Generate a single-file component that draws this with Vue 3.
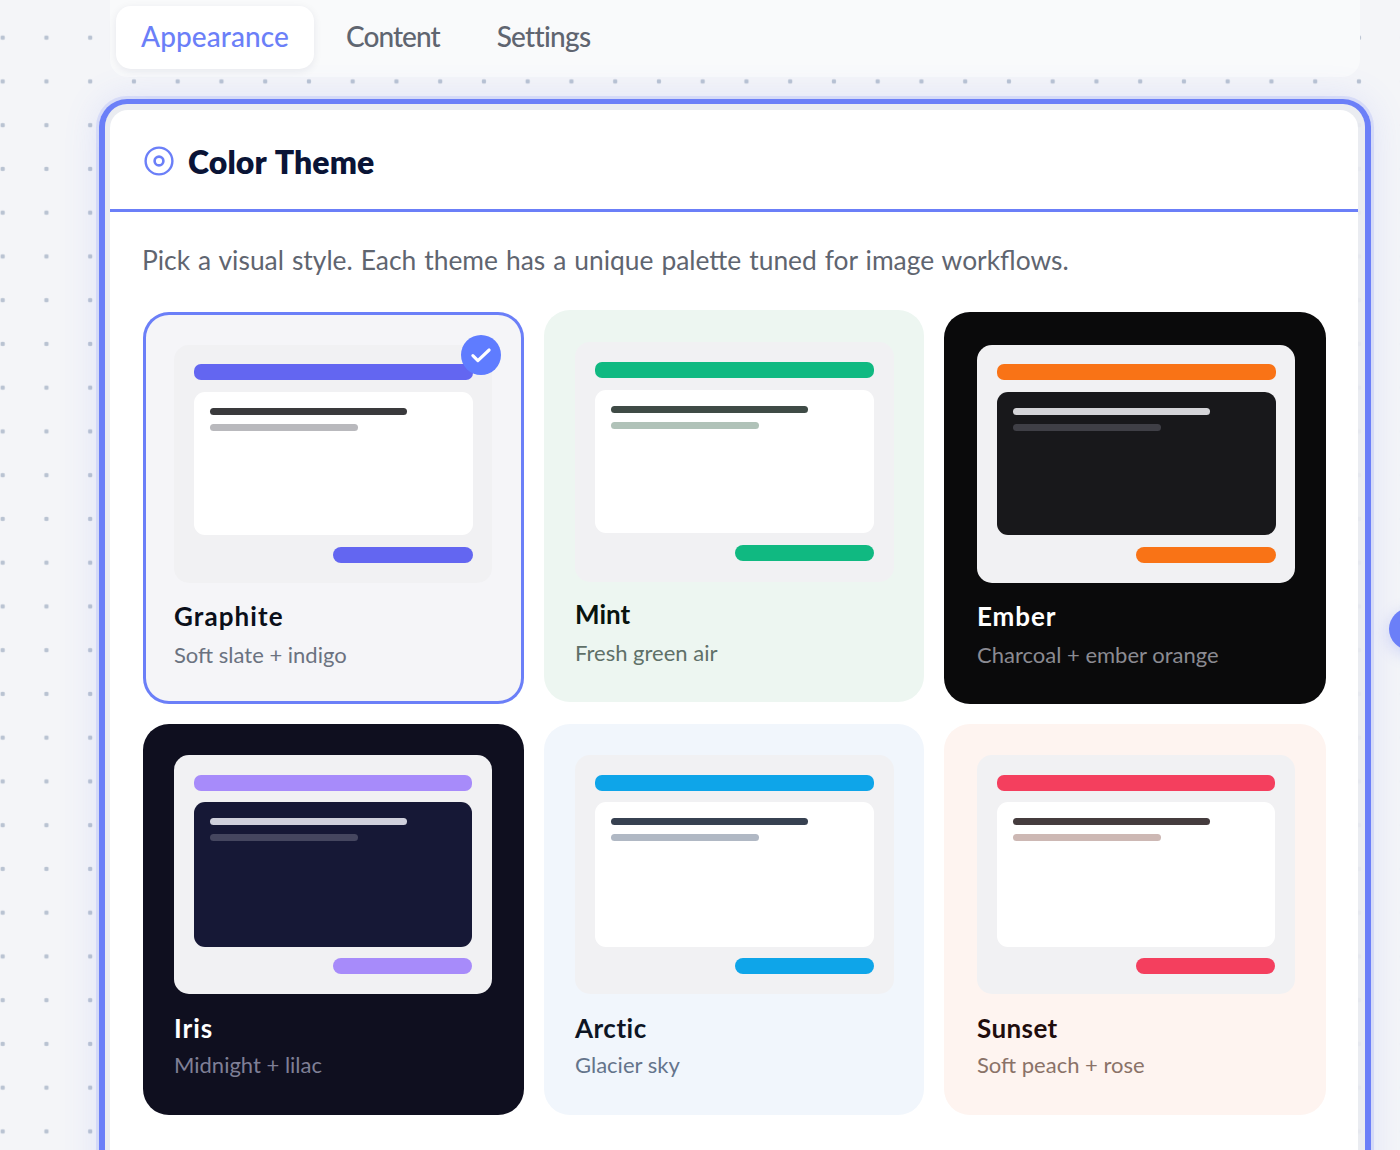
<script setup>
const themes = [
  { name: 'Graphite', sub: 'Soft slate + indigo', cls: 'graphite', selected: true },
  { name: 'Mint', sub: 'Fresh green air', cls: 'mint' },
  { name: 'Ember', sub: 'Charcoal + ember orange', cls: 'ember' },
  { name: 'Iris', sub: 'Midnight + lilac', cls: 'iris' },
  { name: 'Arctic', sub: 'Glacier sky', cls: 'arctic' },
  { name: 'Sunset', sub: 'Soft peach + rose', cls: 'sunset' }
]
</script>

<template>
  <div class="page">
    <nav class="tabs">
      <span class="tab active">Appearance</span>
      <span class="tab content">Content</span>
      <span class="tab settings">Settings</span>
    </nav>
    <div class="ring">
      <section class="panel">
        <header class="panel-head">
          <svg class="target" viewBox="0 0 30 30" width="30" height="30" fill="none" stroke="#6b7ff8">
            <circle cx="15" cy="15" r="13.4" stroke-width="2.4" />
            <circle cx="15" cy="15" r="4.4" stroke-width="2.6" />
          </svg>
          <h2>Color Theme</h2>
        </header>
        <div class="panel-body">
          <p class="desc">Pick a visual style. Each theme has a unique palette tuned for image workflows.</p>
          <div class="grid">
            <article v-for="t in themes" :key="t.name" class="theme" :class="[t.cls, { selected: t.selected }]">
              <span v-if="t.selected" class="check">
                <svg viewBox="0 0 24 24" width="30" height="30" fill="none" stroke="#fff" stroke-width="2.5" stroke-linecap="round" stroke-linejoin="round">
                  <path d="M5.5 12.5l4 4L18.5 8" />
                </svg>
              </span>
              <div class="preview">
                <div class="bar"></div>
                <div class="body">
                  <div class="line l1"></div>
                  <div class="line l2"></div>
                </div>
                <div class="foot"></div>
              </div>
              <h3>{{ t.name }}</h3>
              <p>{{ t.sub }}</p>
            </article>
          </div>
        </div>
      </section>
    </div>
    <span class="fab"></span>
  </div>
</template>

<style scoped>
.page {
  position: relative;
  height: 1150px;
  overflow: hidden;
  box-sizing: border-box;
  padding-left: 99px;
  background-color: #f4f5f8;
  background-image: radial-gradient(circle, #b9c3d2 2px, rgba(185, 195, 210, 0) 2.6px);
  background-size: 43.75px 43.75px;
  background-position: -19.2px 15.8px;
  font-family: Lato, "Noto Sans", sans-serif;
}
.tabs {
  display: flex;
  gap: 7px;
  box-sizing: border-box;
  width: 1250px;
  height: 77px;
  margin-left: 11px;
  padding: 6px;
  background: #f9fafb;
  border-radius: 0 0 18px 18px;
}
.tab {
  display: flex;
  align-items: center;
  box-sizing: border-box;
  padding: 0 25px 4px;
  height: 63px;
  border-radius: 15px;
  font-size: 28px;
  font-weight: 500;
  color: #5f6570;
}
.tab.active {
  background: #fff;
  color: #6b7ff8;
  letter-spacing: 0.1px;
  box-shadow: 0 2px 8px rgba(20, 30, 60, 0.08);
}
.tab.content { letter-spacing: -0.95px; }
.tab.settings { letter-spacing: -0.7px; }
.ring {
  box-sizing: border-box;
  width: 1272px;
  height: 1130px;
  margin-top: 22px;
  padding: 6px 7px 0 5px;
  border: 6px solid #6b7ff8;
  border-top-width: 5px;
  border-bottom: 0;
  border-radius: 28px 28px 0 0;
  background: rgba(232, 234, 240, 0.92);
  box-shadow: 0 0 0 3px rgba(107, 127, 248, 0.16), 0 0 36px rgba(107, 127, 248, 0.16);
}
.panel {
  height: 100%;
  background: #fff;
  border-radius: 18px 18px 0 0;
}
.panel-head {
  display: flex;
  align-items: center;
  gap: 14px;
  box-sizing: border-box;
  height: 102px;
  padding: 3px 34px 0;
  border-bottom: 3px solid #6b7ff8;
}
.target { flex: none; }
h2 {
  margin: 0;
  font-size: 32px;
  font-weight: 800;
  letter-spacing: 0.1px;
  word-spacing: 2px;
  color: #0a1436;
}
.panel-body { padding: 0 32px 0 33px; }
.desc {
  margin: 0 0 0 -1px;
  padding-top: 29px;
  font-size: 26.4px;
  word-spacing: 1.2px;
  line-height: 38px;
  color: #5f6570;
}
.grid {
  display: grid;
  grid-template-columns: 381px 380px 382px;
  grid-template-rows: 392px 391px;
  gap: 20px;
  margin-top: 33px;
}
.theme {
  position: relative;
  box-sizing: border-box;
  padding: 33px 32px 0 31px;
  border-radius: 26px;
  --preview: #f1f1f3;
  --panel: #fff;
}
.preview {
  display: flex;
  flex-direction: column;
  gap: 12px;
  box-sizing: border-box;
  height: 238px;
  padding: 18.5px 19.5px 20px;
  background: var(--preview);
  border-radius: 15px;
}
.bar, .foot {
  height: 16px;
  flex: none;
  border-radius: 7px;
  background: var(--accent);
}
.foot {
  width: 50%;
  align-self: flex-end;
  border-radius: 8px;
}
.body {
  flex: 1;
  padding: 16px;
  background: var(--panel);
  border-radius: 11px;
}
.line {
  height: 7px;
  border-radius: 4px;
}
.l1 { width: 197px; background: var(--line1); }
.l2 { width: 148px; margin-top: 9px; background: var(--line2); }
h3 {
  margin: 16px 0 0;
  font-size: 26px;
  line-height: 34px;
  font-weight: 700;
  letter-spacing: var(--ls);
  color: var(--title);
}
.theme p {
  margin: 6px 0 0;
  font-size: 22px;
  line-height: 32px;
  color: var(--sub);
}
.graphite { background: #f5f5f8; --ls: 1.1px; --accent: #6366f1; --line1: #3a3a3c; --line2: #b9b9bd; --title: #0b0f1a; --sub: #6b7280; }
.mint { background: #edf6f1; --ls: 0; --accent: #10b981; --line1: #3f4b46; --line2: #b0c2b8; --title: #08140e; --sub: #5f7068; transform: translateY(-2px); padding: 32px 30px 0 31px; }
.mint .preview { height: 240px; padding: 19.5px 20px 21px; }
.mint h3 { margin-top: 15px; }
.ember { background: #0a0a0b; --ls: 0.9px; --accent: #f97316; --panel: #18181b; --line1: #d4d4d8; --line2: #3f3f46; --title: #fff; --sub: #8b8b92; padding: 33px 31px 0 33px; }
.iris, .arctic, .sunset { padding-top: 31px; }
.iris .preview, .arctic .preview, .sunset .preview { height: 239px; padding: 20px; gap: 11px; }
.iris h3, .arctic h3, .sunset h3 { margin-top: 17px; }
.iris p, .arctic p, .sunset p { margin-top: 4px; }
.iris { background: #0f0f1f; --ls: 1px; --accent: #a78bfa; --panel: #161836; --line1: #cfd0dc; --line2: #45465f; --title: #fff; --sub: #7f7f96; }
.arctic { background: #f1f6fc; --ls: 0.5px; --accent: #0ea5e9; --line1: #374151; --line2: #b0b8c4; --title: #0d1524; --sub: #64748b; padding-right: 30px; }
.sunset { background: #fef4f0; --ls: 0.4px; --accent: #f43f5e; --line1: #453c3e; --line2: #cdb8b4; --title: #1f0d0d; --sub: #8a7268; padding-left: 33px; padding-right: 31px; }
.selected {
  box-shadow: inset 0 0 0 3px #6b7ff8;
}
.check {
  position: absolute;
  top: 23px;
  right: 23px;
  display: flex;
  align-items: center;
  justify-content: center;
  width: 40px;
  height: 40px;
  border-radius: 50%;
  background: #5f7cff;
}
.fab {
  position: absolute;
  left: 1389px;
  top: 608px;
  width: 42px;
  height: 42px;
  border-radius: 50%;
  background: #6b7ff8;
  box-shadow: 0 4px 16px rgba(107, 127, 248, 0.3);
}
</style>
